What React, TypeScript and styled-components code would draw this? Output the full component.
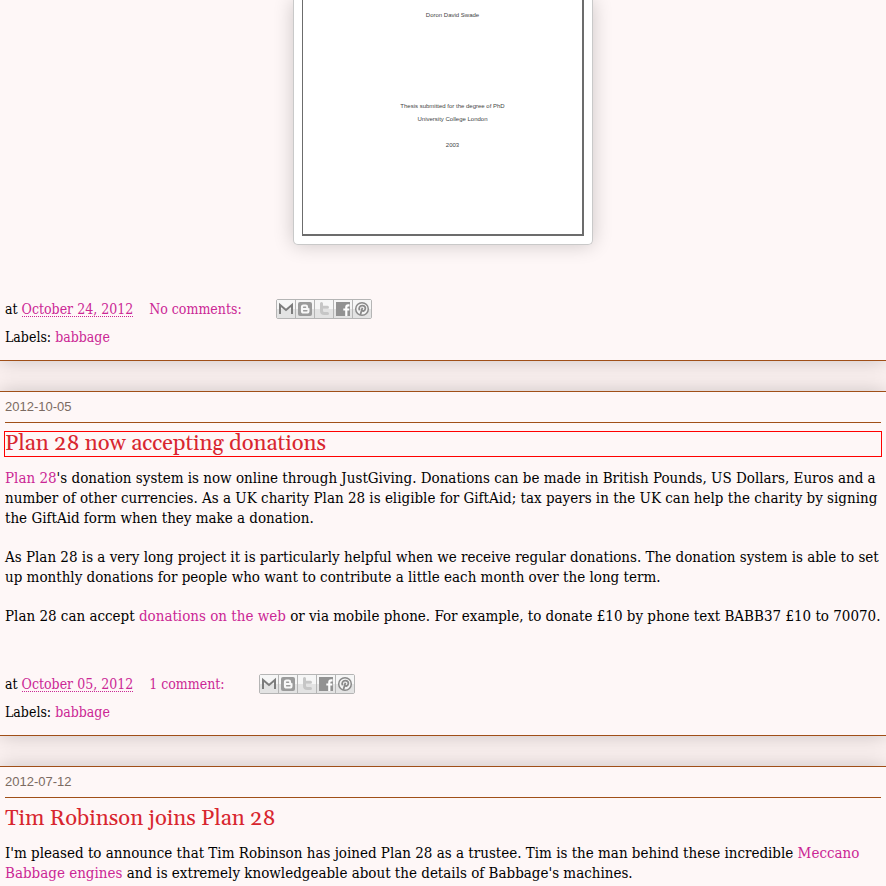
import React from 'react';
import styled, { createGlobalStyle } from 'styled-components';

const GlobalStyle = createGlobalStyle`
  body {
    margin: 0;
    background: #fbf1f0;
    color: #000;
    font-family: 'DejaVu Serif Condensed', 'DejaVu Serif', serif;
    font-size: 14px;
    line-height: 20px;
  }
`;

const Page = styled.main`
  height: 100vh;
  overflow: hidden;
`;

const Post = styled.article`
  box-sizing: border-box;
  padding: 5px 5px 13px;
  background: #fef7f7;
  border: solid #a04f18;
  border-width: 1px 0;
  box-shadow: 0 0 20px rgba(0, 0, 0, 0.2);
  margin-bottom: 30px;
`;

const ContinuedPost = styled(Post)`
  border-top: 0;
  padding-top: 0;
`;

const DateHeader = styled.h2`
  margin: 0;
  padding-bottom: 5px;
  border-bottom: 1px solid #a04f18;
  color: #7b6b62;
  font: 13px/20px 'Liberation Sans', Arial, sans-serif;
`;

const Title = styled.h3<{ $outlined?: boolean }>`
  margin: 9px 0 12px;
  outline: ${(p) => (p.$outlined ? '1px solid #f00' : 'none')};
  outline-offset: 0;
  color: #d8262f;
  font: 22px/24px Gelasio, Georgia, 'Liberation Serif', serif;
`;

const Body = styled.div`
  font-size: 15px;
`;

const Paragraph = styled.p`
  margin: 0 0 19px;
`;

const Link = styled.a`
  color: #cb2795;
  text-decoration: none;
`;

const Stamp = styled.abbr`
  display: inline-block;
  border-bottom: 1px dotted #cb2795;
  line-height: 14px;
  text-decoration: none;
`;

const Footer = styled.footer`
  display: grid;
  row-gap: 8px;
  margin-top: 48px;
`;

const FooterLine = styled.div`
  display: flex;
  align-items: center;
  height: 20px;
`;

const Posted = styled.span`
  margin-right: 16px;
`;

const ShareBar = styled.div`
  display: flex;
  box-sizing: border-box;
  height: 20px;
  margin-left: 34px;
  border: 1px solid #b5b5b5;
  border-radius: 2px;
`;

const ShareButton = styled.a`
  display: block;
  width: 18px;
  height: 18px;
  background: linear-gradient(#f6f6f6 50%, #e3e3e3 50%);

  & + & {
    border-left: 1px solid #b5b5b5;
  }

  svg {
    display: block;
  }
`;

const Cover = styled.figure`
  box-sizing: border-box;
  width: 300px;
  margin: 0 auto 54px;
  padding: 0 8px 8px;
  background: #fff;
  border: 1px solid #c9c9c9;
  border-top: 0;
  border-radius: 0 0 5px 5px;
  box-shadow: 0 0 20px rgba(0, 0, 0, 0.2);
`;

const Sheet = styled.div`
  box-sizing: border-box;
  height: 236px;
  padding: 9px 0 0 20px;
  border: solid #6c6c6c;
  border-width: 0 2px 2px 1px;
  color: #444;
  font: 6px/13px 'Liberation Sans', Arial, sans-serif;
  text-align: center;
`;

const SheetLine = styled.p<{ $gap?: number }>`
  margin: ${(p) => p.$gap ?? 0}px 0 0;
`;

const icons = [
  {
    name: 'Email This',
    art: <path d="M3 14V5l6 5 6-5v9" fill="none" stroke="#7d7d7d" strokeWidth="2" />,
  },
  {
    name: 'BlogThis!',
    art: (
      <>
        <rect x="2" y="2" width="14" height="14" rx="2" fill="#9b9b9b" />
        <path
          d="M7.5 4.5h2.2a2.4 2.4 0 0 1 2.4 2.4c0 1 .3 1.4 1.4 1.4v2.6a2.6 2.6 0 0 1-2.6 2.6H7.5a2.6 2.6 0 0 1-2.6-2.6V7.1a2.6 2.6 0 0 1 2.6-2.6z"
          fill="#f8f8f8"
        />
        <path d="M7.6 7.3h2M7.6 10.800h3.3" stroke="#9b9b9b" strokeWidth="1.4" strokeLinecap="round" />
      </>
    ),
  },
  {
    name: 'Share to X',
    art: (
      <path
        d="M6.5 3.5v7.2c0 2 1 2.800 2.800 2.800h3.2M6.500 7.300h6"
        fill="none"
        stroke="#c6c6c6"
        strokeWidth="3"
        strokeLinecap="round"
      />
    ),
  },
  {
    name: 'Share to Facebook',
    art: (
      <>
        <rect x="2" y="2" width="14" height="14" fill="#929292" />
        <path d="M15.5 5.3h-1.300c-1.400 0-1.900.6-1.900 1.900V16M9.300 9.500h6" fill="none" stroke="#fff" strokeWidth="2.2" />
      </>
    ),
  },
  {
    name: 'Share to Pinterest',
    art: (
      <>
        <circle cx="9" cy="9" r="6.3" fill="#f4f4f4" stroke="#8a8a8a" strokeWidth="1.5" />
        <path
          d="M6.7 10.300C5.300 8 6.700 5.600 9.300 5.600c2.300 0 3.400 1.500 3 3.300-.500 2.100-2.500 2.700-3.500 1.400M9.400 7.800 7.300 15"
          fill="none"
          stroke="#8a8a8a"
          strokeWidth="1.8"
        />
      </>
    ),
  },
];

function PostFooter({ date, comments }: { date: string; comments: string }) {
  return (
    <Footer>
      <FooterLine>
        <Posted>
          at{' '}
          <Link href="#post">
            <Stamp>{date}</Stamp>
          </Link>
        </Posted>
        <Link href="#comments">{comments}</Link>
        <ShareBar>
          {icons.map((icon) => (
            <ShareButton key={icon.name} href="#share" aria-label={icon.name} title={icon.name}>
              <svg width="18" height="18" viewBox="0 0 18 18" aria-hidden="true">
                {icon.art}
              </svg>
            </ShareButton>
          ))}
        </ShareBar>
      </FooterLine>
      <FooterLine>
        <span>
          Labels: <Link href="#babbage">babbage</Link>
        </span>
      </FooterLine>
    </Footer>
  );
}

export default function App() {
  return (
    <Page>
      <GlobalStyle />
      <ContinuedPost>
        <Cover>
          <Sheet>
            <SheetLine>Doron David Swade</SheetLine>
            <SheetLine $gap={78}>Thesis submitted for the degree of PhD</SheetLine>
            <SheetLine>University College London</SheetLine>
            <SheetLine $gap={13}>2003</SheetLine>
          </Sheet>
        </Cover>
        <PostFooter date="October 24, 2012" comments="No comments:" />
      </ContinuedPost>

      <Post>
        <DateHeader>2012-10-05</DateHeader>
        <Title $outlined>Plan 28 now accepting donations</Title>
        <Body>
          <Paragraph>
            <Link href="#plan28">Plan 28</Link>'s donation system is now online through JustGiving. Donations can be
            made in British Pounds, US Dollars, Euros and a number of other currencies. As a UK charity Plan 28 is
            eligible for GiftAid; tax payers in the UK can help the charity by signing the GiftAid form when they make
            a donation.
          </Paragraph>
          <Paragraph>
            As Plan 28 is a very long project it is particularly helpful when we receive regular donations. The
            donation system is able to set up monthly donations for people who want to contribute a little each month
            over the long term.
          </Paragraph>
          <Paragraph>
            Plan 28 can accept <Link href="#donate">donations on the web</Link> or via mobile phone. For example, to
            donate £10 by phone text BABB37 £10 to 70070.
          </Paragraph>
        </Body>
        <PostFooter date="October 05, 2012" comments="1 comment:" />
      </Post>

      <Post>
        <DateHeader>2012-07-12</DateHeader>
        <Title>Tim Robinson joins Plan 28</Title>
        <Body>
          <Paragraph>
            I'm pleased to announce that Tim Robinson has joined Plan 28 as a trustee. Tim is the man behind these
            incredible <Link href="#meccano">Meccano Babbage engines</Link> and is extremely knowledgeable about the
            details of Babbage's machines.
          </Paragraph>
        </Body>
      </Post>
    </Page>
  );
}
